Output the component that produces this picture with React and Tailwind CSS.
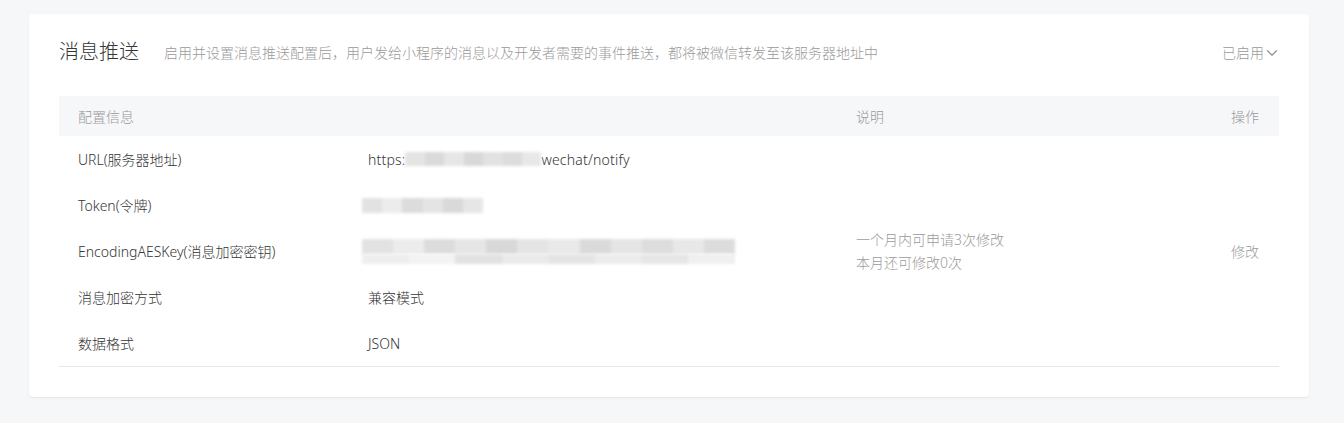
import React from 'react';
import { ChevronDown } from 'lucide-react';

const rows = [
  { label: 'URL(服务器地址)', value: 'url' },
  { label: 'Token(令牌)', value: 'token' },
  { label: 'EncodingAESKey(消息加密密钥)', value: 'aes' },
  { label: '消息加密方式', value: '兼容模式' },
  { label: '数据格式', value: 'JSON' },
];

// blurred placeholder for masked secrets
const Blur = ({ w, h, shades }) => (
  <div className="flex blur-[1.5px]" style={{ width: w, height: h }}>
    {shades.map((s, i) => (
      <div key={i} className="flex-1" style={{ background: s }} />
    ))}
  </div>
);

const renderValue = (v) => {
  if (v === 'url') {
    return (
      <div className="flex items-center tracking-[0.2px]">
        <span>https:</span>
        <Blur w={136} h={14} shades={['#e4e4e4', '#dadada', '#e6e6e6', '#d8d8d8', '#e2e2e2', '#dcdcdc', '#e8e8e8']} />
        <span>wechat/notify</span>
      </div>
    );
  }
  if (v === 'token') {
    return (
      <div className="-ml-[6px]">
        <Blur w={121} h={15} shades={['#e2e2e2', '#ececec', '#dcdcdc', '#e4e4e4', '#d9d9d9', '#e6e6e6']} />
      </div>
    );
  }
  if (v === 'aes') {
    return (
      <div className="-ml-[6px] flex flex-col">
        <Blur w={373} h={15} shades={['#e2e2e2', '#ececec', '#dcdcdc', '#e6e6e6', '#d8d8d8', '#e4e4e4', '#e9e9e9', '#dadada', '#e5e5e5', '#dddddd', '#e8e8e8', '#dcdcdc']} />
        <Blur w={373} h={10} shades={['#eeeeee', '#f3f3f3', '#e2e2e2', '#eaeaea', '#e4e4e4', '#ececec', '#e6e6e6', '#f0f0f0']} />
      </div>
    );
  }
  return <span>{v}</span>;
};

const App = () => {
  return (
    <div
      className="min-h-[423px] bg-[#f6f7f9] pt-[14px] pl-[29px] pr-[35px] font-light"
      style={{ fontFamily: '"Noto Sans", "Noto Sans CJK SC", sans-serif' }}
    >
      <div className="bg-white rounded-[4px] shadow-[0_1px_2px_rgba(0,0,0,0.08)] px-[30px] pt-[24px] pb-[30px]">
        {/* Title */}
        <div className="flex items-center h-[28px]">
          <h2 className="text-[20px] text-[#353535] leading-[28px]">消息推送</h2>
          <p className="ml-[25px] text-[14px] text-[#9a9a9a]">
            启用并设置消息推送配置后，用户发给小程序的消息以及开发者需要的事件推送，都将被微信转发至该服务器地址中
          </p>
          <div className="ml-auto flex items-center text-[14px] text-[#9a9a9a]">
            已启用
            <ChevronDown size={18} strokeWidth={1.5} className="-ml-[1px] -mr-[2px] mt-[1px] text-[#8c8c8c]" />
          </div>
        </div>

        {/* Table */}
        <div className="mt-[30px] text-[14px] border-b border-[#e7e7eb]">
          <div className="grid grid-cols-[289px_488px_1fr_120px] h-[40px] items-center bg-[#f6f7f9] text-[#9a9a9a]">
            <div className="pl-[19px]">配置信息</div>
            <div />
            <div className="pl-[20px]">说明</div>
            <div className="text-right pr-[20px]">操作</div>
          </div>
          <div className="grid grid-cols-[289px_488px_1fr_120px] grid-rows-[repeat(5,46px)] text-[#353535]">
            {rows.map((r, i) => (
              <React.Fragment key={r.label}>
                <div className="pl-[19px] flex items-center" style={{ gridRow: i + 1, gridColumn: 1 }}>
                  {r.label}
                </div>
                <div className="pl-[20px] flex items-center" style={{ gridRow: i + 1, gridColumn: 2 }}>
                  {renderValue(r.value)}
                </div>
              </React.Fragment>
            ))}
            <div className="col-start-3 row-start-1 row-span-5 pl-[20px] flex flex-col justify-center text-[#9a9a9a] leading-[23px]">
              <div>一个月内可申请3次修改</div>
              <div>本月还可修改0次</div>
            </div>
            <div className="col-start-4 row-start-1 row-span-5 pr-[20px] flex items-center justify-end text-[#9a9a9a]">
              修改
            </div>
          </div>
        </div>
      </div>
    </div>
  );
};

export default App;
